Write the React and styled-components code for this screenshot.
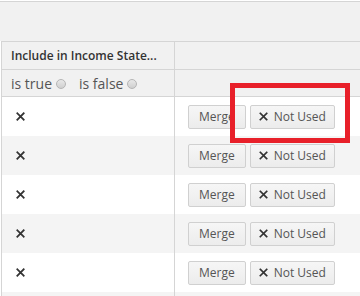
import styled, { createGlobalStyle } from "styled-components"

const Global = createGlobalStyle`
  body {
    margin: 0;
    background: #fff;
    font-family: "Open Sans", "Liberation Sans", sans-serif;
  }
`

const rows = [0, 1, 2, 3, 4]

const CrossIcon = ({ size = 9, stroke = 2 }) => (
  <svg width={size} height={size} viewBox="0 0 10 10">
    <path d="M1.5 1.5 L8.5 8.5 M8.5 1.5 L1.5 8.5" stroke="#333" strokeWidth={stroke} strokeLinecap="square" />
  </svg>
)

const App = () => {
  return (
    <Page>
      <Global />
      <Toolbar />
      <Grid>
        <HeadCell>Include in Income State...</HeadCell>
        <HeadCell $last />
        <FilterCell>
          <FilterOpt>is true <Radio /></FilterOpt>
          <FilterOpt>is false <Radio /></FilterOpt>
        </FilterCell>
        <FilterCell $last />
        {rows.map((r) => (
          <Row key={r} $alt={r % 2 === 1}>
            <MarkCell>
              <CrossIcon />
            </MarkCell>
            <ActionCell>
              <Button>Merge</Button>
              <Button>
                <CrossIcon size={9} stroke={1.9} />
                Not Used
              </Button>
            </ActionCell>
          </Row>
        ))}
        <Row $alt>
          <MarkCell />
          <ActionCell />
        </Row>
      </Grid>
      <Highlight />
    </Page>
  )
}

export default App

const Page = styled.div`
  position: relative;
  width: 360px;
  height: 296px;
  overflow: hidden;
  padding-top: 1px;
  box-sizing: border-box;
`

const Toolbar = styled.div`
  height: 39px;
  background: #f1f1f1;
  border-top: 1px solid #d5d5d5;
`

const Grid = styled.div`
  display: grid;
  grid-template-columns: 173px 1fr;
  border-left: 1px solid #d5d5d5;
  margin-left: 1px;
`

const HeadCell = styled.div`
  height: 27px;
  background: #f1f1f1;
  border-top: 1px solid #d5d5d5;
  border-bottom: 1px solid #d5d5d5;
  border-right: ${(p) => (p.$last ? "none" : "1px solid #d5d5d5")};
  display: flex;
  align-items: center;
  padding-left: 9px;
  font-size: 12px;
  font-weight: 600;
  color: #333;
  white-space: nowrap;
`

const FilterCell = styled.div`
  height: 26px;
  background: #f1f1f1;
  border-bottom: 1px solid #d5d5d5;
  border-right: ${(p) => (p.$last ? "none" : "1px solid #d5d5d5")};
  display: flex;
  align-items: center;
  gap: 13px;
  padding-left: 9px;
  font-size: 14px;
  color: #555;
`

const FilterOpt = styled.span`
  display: flex;
  align-items: center;
  gap: 4px;
`

const Radio = styled.span`
  width: 8px;
  height: 8px;
  border-radius: 50%;
  border: 1px solid #b5b5b5;
  background: linear-gradient(#e8e8e8, #cfcfcf);
  margin-top: 2px;
`

const Row = styled.div`
  display: contents;
  & > div {
    height: 39px;
    background: ${(p) => (p.$alt ? "#f4f4f4" : "#fff")};
  }
`

const MarkCell = styled.div`
  border-right: 1px solid #d5d5d5;
  display: flex;
  align-items: center;
  padding-left: 14px;
`

const ActionCell = styled.div`
  display: flex;
  align-items: center;
  gap: 4px;
  padding-left: 13px;
`

const Button = styled.div`
  height: 22px;
  display: flex;
  align-items: center;
  gap: 6px;
  padding: 0 10px;
  border: 1px solid #d0d0d0;
  border-radius: 2px;
  background: linear-gradient(#f6f6f6, #ececec);
  font-size: 12px;
  color: #555;
  box-sizing: content-box;
  &:last-child {
    padding: 0 8px 0 8px;
  }
`

const Highlight = styled.div`
  position: absolute;
  left: 230px;
  top: 83px;
  width: 110px;
  height: 50px;
  border: 5px solid #e8202a;
`
